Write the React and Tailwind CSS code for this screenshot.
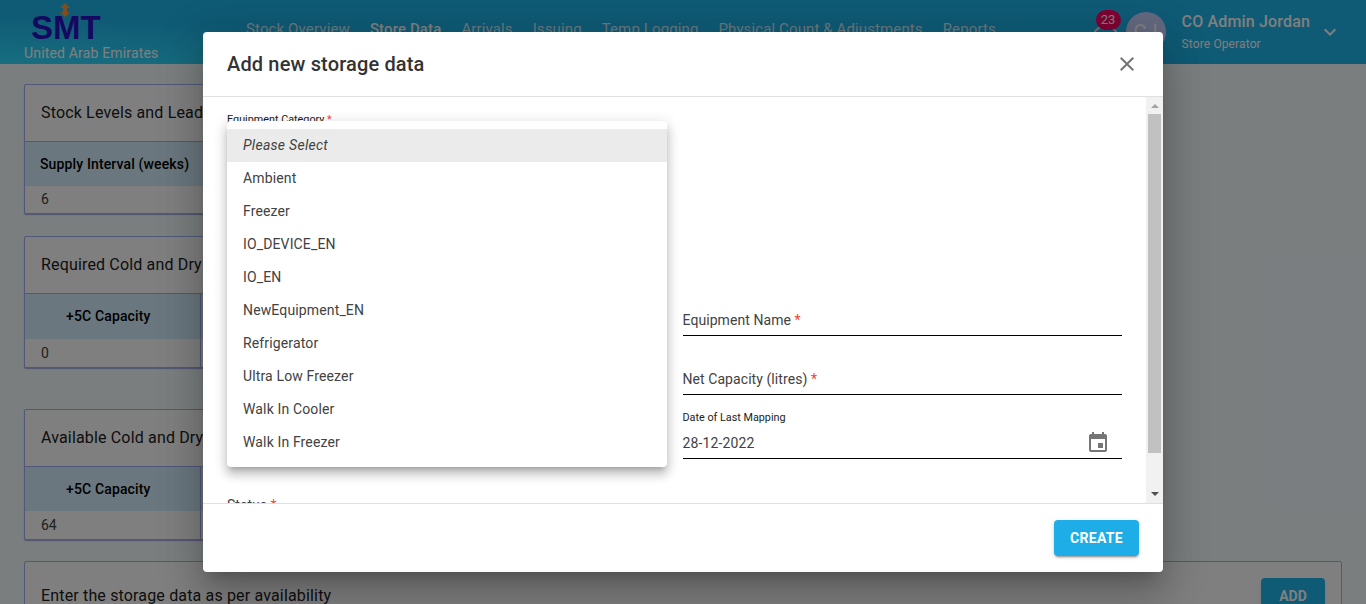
const font = { fontFamily: "Roboto, sans-serif" };

const navItems = ["Stock Overview", "Store Data", "Arrivals", "Issuing", "Temp Logging", "Physical Count & Adjustments", "Reports"];
const equipment = ["Ambient", "Freezer", "IO_DEVICE_EN", "IO_EN", "NewEquipment_EN", "Refrigerator", "Ultra Low Freezer", "Walk In Cooler", "Walk In Freezer"];

function MuiIcon({ d, className }) {
  return (
    <svg viewBox="0 0 24 24" fill="currentColor" className={className}>
      <path d={d} />
    </svg>
  );
}

function Header() {
  return (
    <header className="h-[64px] flex items-start bg-gradient-to-tr from-[#30dcff] via-[#1eb4ea] via-40% to-[#1eb4ea] text-white">
      <div className="w-[246px] pl-[24px] shrink-0">
        <div className="relative h-[37px] pl-[7px] pt-[12px] text-[33px] leading-[32px] font-black text-[#2a10c0] [font-family:'Liberation_Sans',sans-serif]">
          SMT
          <svg viewBox="0 0 10 14" className="absolute left-[36px] top-[3px] w-[10px] h-[14px]">
            <path d="M5 0 10 5H7v4h3l-5 5-5-5h3V5H0z" fill="#ff9a3c" />
          </svg>
        </div>
        <div className="text-[14px] leading-[18px] mt-[7px] tracking-[0.012em]">United Arab Emirates</div>
      </div>
      <nav className="flex gap-[20px] pt-[19px] text-[15px] leading-[20px] tracking-[0.008em]">
        {navItems.map(item => (
          <span key={item} className={item === "Store Data" ? "font-medium" : "opacity-80"}>{item}</span>
        ))}
      </nav>
      <div className="ml-auto flex items-start">
        <div className="relative w-[27px] h-[27px] mt-[25px] mr-[7px] rounded-full border-2 border-white/80">
          <span className="absolute left-[2px] top-[-17px] w-[25px] h-[20px] rounded-full bg-[#ff0066] text-[13px] leading-[20px] text-center">23</span>
        </div>
        <div className="w-[40px] h-[40px] mt-[12px] rounded-full bg-[#c8d0ff] flex items-center justify-center text-[20px]">CJ</div>
        <div className="ml-[16px] pt-[12px]">
          <div className="text-[16px] leading-[20px] font-medium tracking-[0.01em]">CO Admin Jordan</div>
          <div className="text-[12px] leading-[16px] mt-[4px] tracking-[0.01em]">Store Operator</div>
        </div>
        <MuiIcon d="M16.590 8.590 12 13.170 7.410 8.590 6 10l6 6 6-6z" className="w-[24px] h-[24px] mt-[20px] ml-[8px] mr-[24px]" />
      </div>
    </header>
  );
}

function DataCard({ title, head, value, first, compact, className }) {
  const headHeight = compact ? "h-[44px]" : "h-[45px]";
  return (
    <section className={`w-[1100px] bg-white border border-[#a4b0f4] rounded-[2px] shadow-[0_1px_1px_rgba(80,90,200,0.5)] ${className}`}>
      <div className="h-[56px] pl-[16px] flex items-center text-[16px] text-[#212121] tracking-[0.01em]">{title}</div>
      {first ? (
        <div className="border-t border-[#a4b0f4]">
          <div className="h-[44px] bg-[#d4eefc] flex items-center pl-[15px] text-[14px] font-medium text-black tracking-[0.01em]">{head}</div>
          <div className="h-[27px] pl-[16px] flex items-center text-[14px] text-[#424242]">{value}</div>
        </div>
      ) : (
        <div className="grid grid-cols-[176px_1fr] border-t border-[#a4b0f4]">
          <div className={`${headHeight} bg-[#d4eefc] flex items-center pl-[41px] border-r border-[#a4b0f4] text-[14px] font-medium text-black tracking-[0.01em]`}>{head}</div>
          <div className={`${headHeight} bg-[#d4eefc]`} />
          <div className="h-[28px] pl-[16px] flex items-center border-r border-[#a4b0f4] text-[14px] text-[#424242]">{value}</div>
          <div className="h-[28px]" />
        </div>
      )}
    </section>
  );
}

function Field({ label, className }) {
  return (
    <div className={`h-[24px] border-b border-black text-[14px] leading-[16px] text-[#424242] tracking-[0.005em] ${className}`}>
      {label} <span className="text-[#f44336]">*</span>
    </div>
  );
}

function Dialog() {
  return (
    <div className="absolute inset-0 bg-black/50 flex items-start justify-center pt-[32px]">
      <div className="relative w-[960px] h-[540px] mx-[23px] bg-white rounded-[4px] flex flex-col shadow-[0_11px_15px_-7px_rgba(0,0,0,0.2),0_24px_38px_3px_rgba(0,0,0,0.14),0_9px_46px_8px_rgba(0,0,0,0.12)]">
        <div className="h-[65px] shrink-0 px-[24px] flex items-center justify-between border-b border-[#e0e0e0]">
          <h2 className="text-[20px] font-medium text-[#333333] tracking-[0.0075em]">Add new storage data</h2>
          <MuiIcon d="M19 6.410 17.590 5 12 10.590 6.410 5 5 6.410 10.590 12 5 17.590 6.410 19 12 13.410 17.590 19 19 17.590 13.410 12z" className="w-[24px] h-[24px] text-[#757575]" />
        </div>

        <div className="h-[407px] shrink-0 flex border-b border-[#e0e0e0] overflow-hidden">
          <div className="flex-1 px-[24px] grid grid-cols-2 gap-[16px]">
            <div className="pt-[16px]">
              <div className="text-[10.800px] leading-[14px] text-[#212121]">Equipment Category <span className="text-[#f44336]">*</span></div>
              <div className="mt-[369px] text-[14px] leading-[18px] text-[#424242]">Status <span className="text-[#f44336]">*</span></div>
            </div>
            <div className="pt-[215px]">
              <Field label="Equipment Name" />
              <Field label="Net Capacity (litres)" className="mt-[35px]" />
              <div className="mt-[16px] text-[10.800px] leading-[14px] text-[#212121]">Date of Last Mapping</div>
              <div className="mt-[1px] pt-[2px] h-[33px] border-b border-black flex items-center justify-between text-[14px] text-[#424242] tracking-[0.01em]">
                28-12-2022
                <MuiIcon d="M17 12h-5v5h5v-5zM16 1v2H8V1H6v2H5c-1.110 0-1.990.9-1.990 2L3 19c0 1.100.89 2 2 2h14c1.100 0 2-.9 2-2V5c0-1.100-.9-2-2-2h-1V1h-2zm3 18H5V8h14v11z" className="w-[24px] h-[24px] mr-[12px] text-[#757575]" />
              </div>
            </div>
          </div>
          <div className="w-[17px] shrink-0 bg-[#f1f1f1] flex flex-col items-center">
            <div className="h-[17px] flex items-center justify-center">
              <div className="w-0 h-0 border-x-[4px] border-x-transparent border-b-[4px] border-b-[#a3a3a3]" />
            </div>
            <div className="w-[13px] h-[339px] bg-[#c1c1c1]" />
            <div className="flex-1 flex items-end pb-[7px]">
              <div className="w-0 h-0 border-x-[4px] border-x-transparent border-t-[4px] border-t-[#505050]" />
            </div>
          </div>
        </div>

        <div className="flex-1 flex items-start justify-end pt-[16px] pr-[24px]">
          <button className="h-[36px] w-[85px] rounded-[4px] bg-[#1eade6] text-white text-[14px] font-bold tracking-[0.02em] shadow-[0_3px_1px_-2px_rgba(0,0,0,0.2),0_2px_2px_0_rgba(0,0,0,0.14),0_1px_5px_0_rgba(0,0,0,0.12)]">CREATE</button>
        </div>

        <ul className="absolute left-[24px] top-[89px] w-[440px] py-[8px] bg-white rounded-[4px] text-[14px] text-[#424242] tracking-[0.01em] shadow-[0_5px_5px_-3px_rgba(0,0,0,0.2),0_8px_10px_1px_rgba(0,0,0,0.14),0_3px_14px_2px_rgba(0,0,0,0.12)]">
          <li className="h-[33px] pl-[16px] flex items-center italic bg-[#ebebeb] tracking-[0.02em]">Please Select</li>
          {equipment.map(name => (
            <li key={name} className="h-[33px] pl-[16px] flex items-center">{name}</li>
          ))}
        </ul>
      </div>
    </div>
  );
}

export default function App() {
  return (
    <div style={font} className="relative h-[604px] overflow-hidden bg-[#f4fcff]">
      <Header />
      <main className="px-[24px] pt-[20px]">
        <DataCard first title="Stock Levels and Lead Time" head="Supply Interval (weeks)" value="6" />
        <DataCard title="Required Cold and Dry Storage" head="+5C Capacity" value="0" className="mt-[22px]" />
        <DataCard compact title="Available Cold and Dry Storage" head="+5C Capacity" value="64" className="mt-[41px]" />
        <section className="mt-[21px] h-[80px] bg-white border border-[#a4b0f4] rounded-[2px] px-[16px] pt-[16px] flex items-start justify-between">
          <span className="text-[16px] text-[#212121] tracking-[0.01em] mt-[6px]">Enter the storage data as per availability</span>
          <button className="h-[36px] w-[64px] rounded-[4px] bg-[#1eb4ea] text-white text-[14px] font-bold shadow-md">ADD</button>
        </section>
      </main>
      <Dialog />
    </div>
  );
}
